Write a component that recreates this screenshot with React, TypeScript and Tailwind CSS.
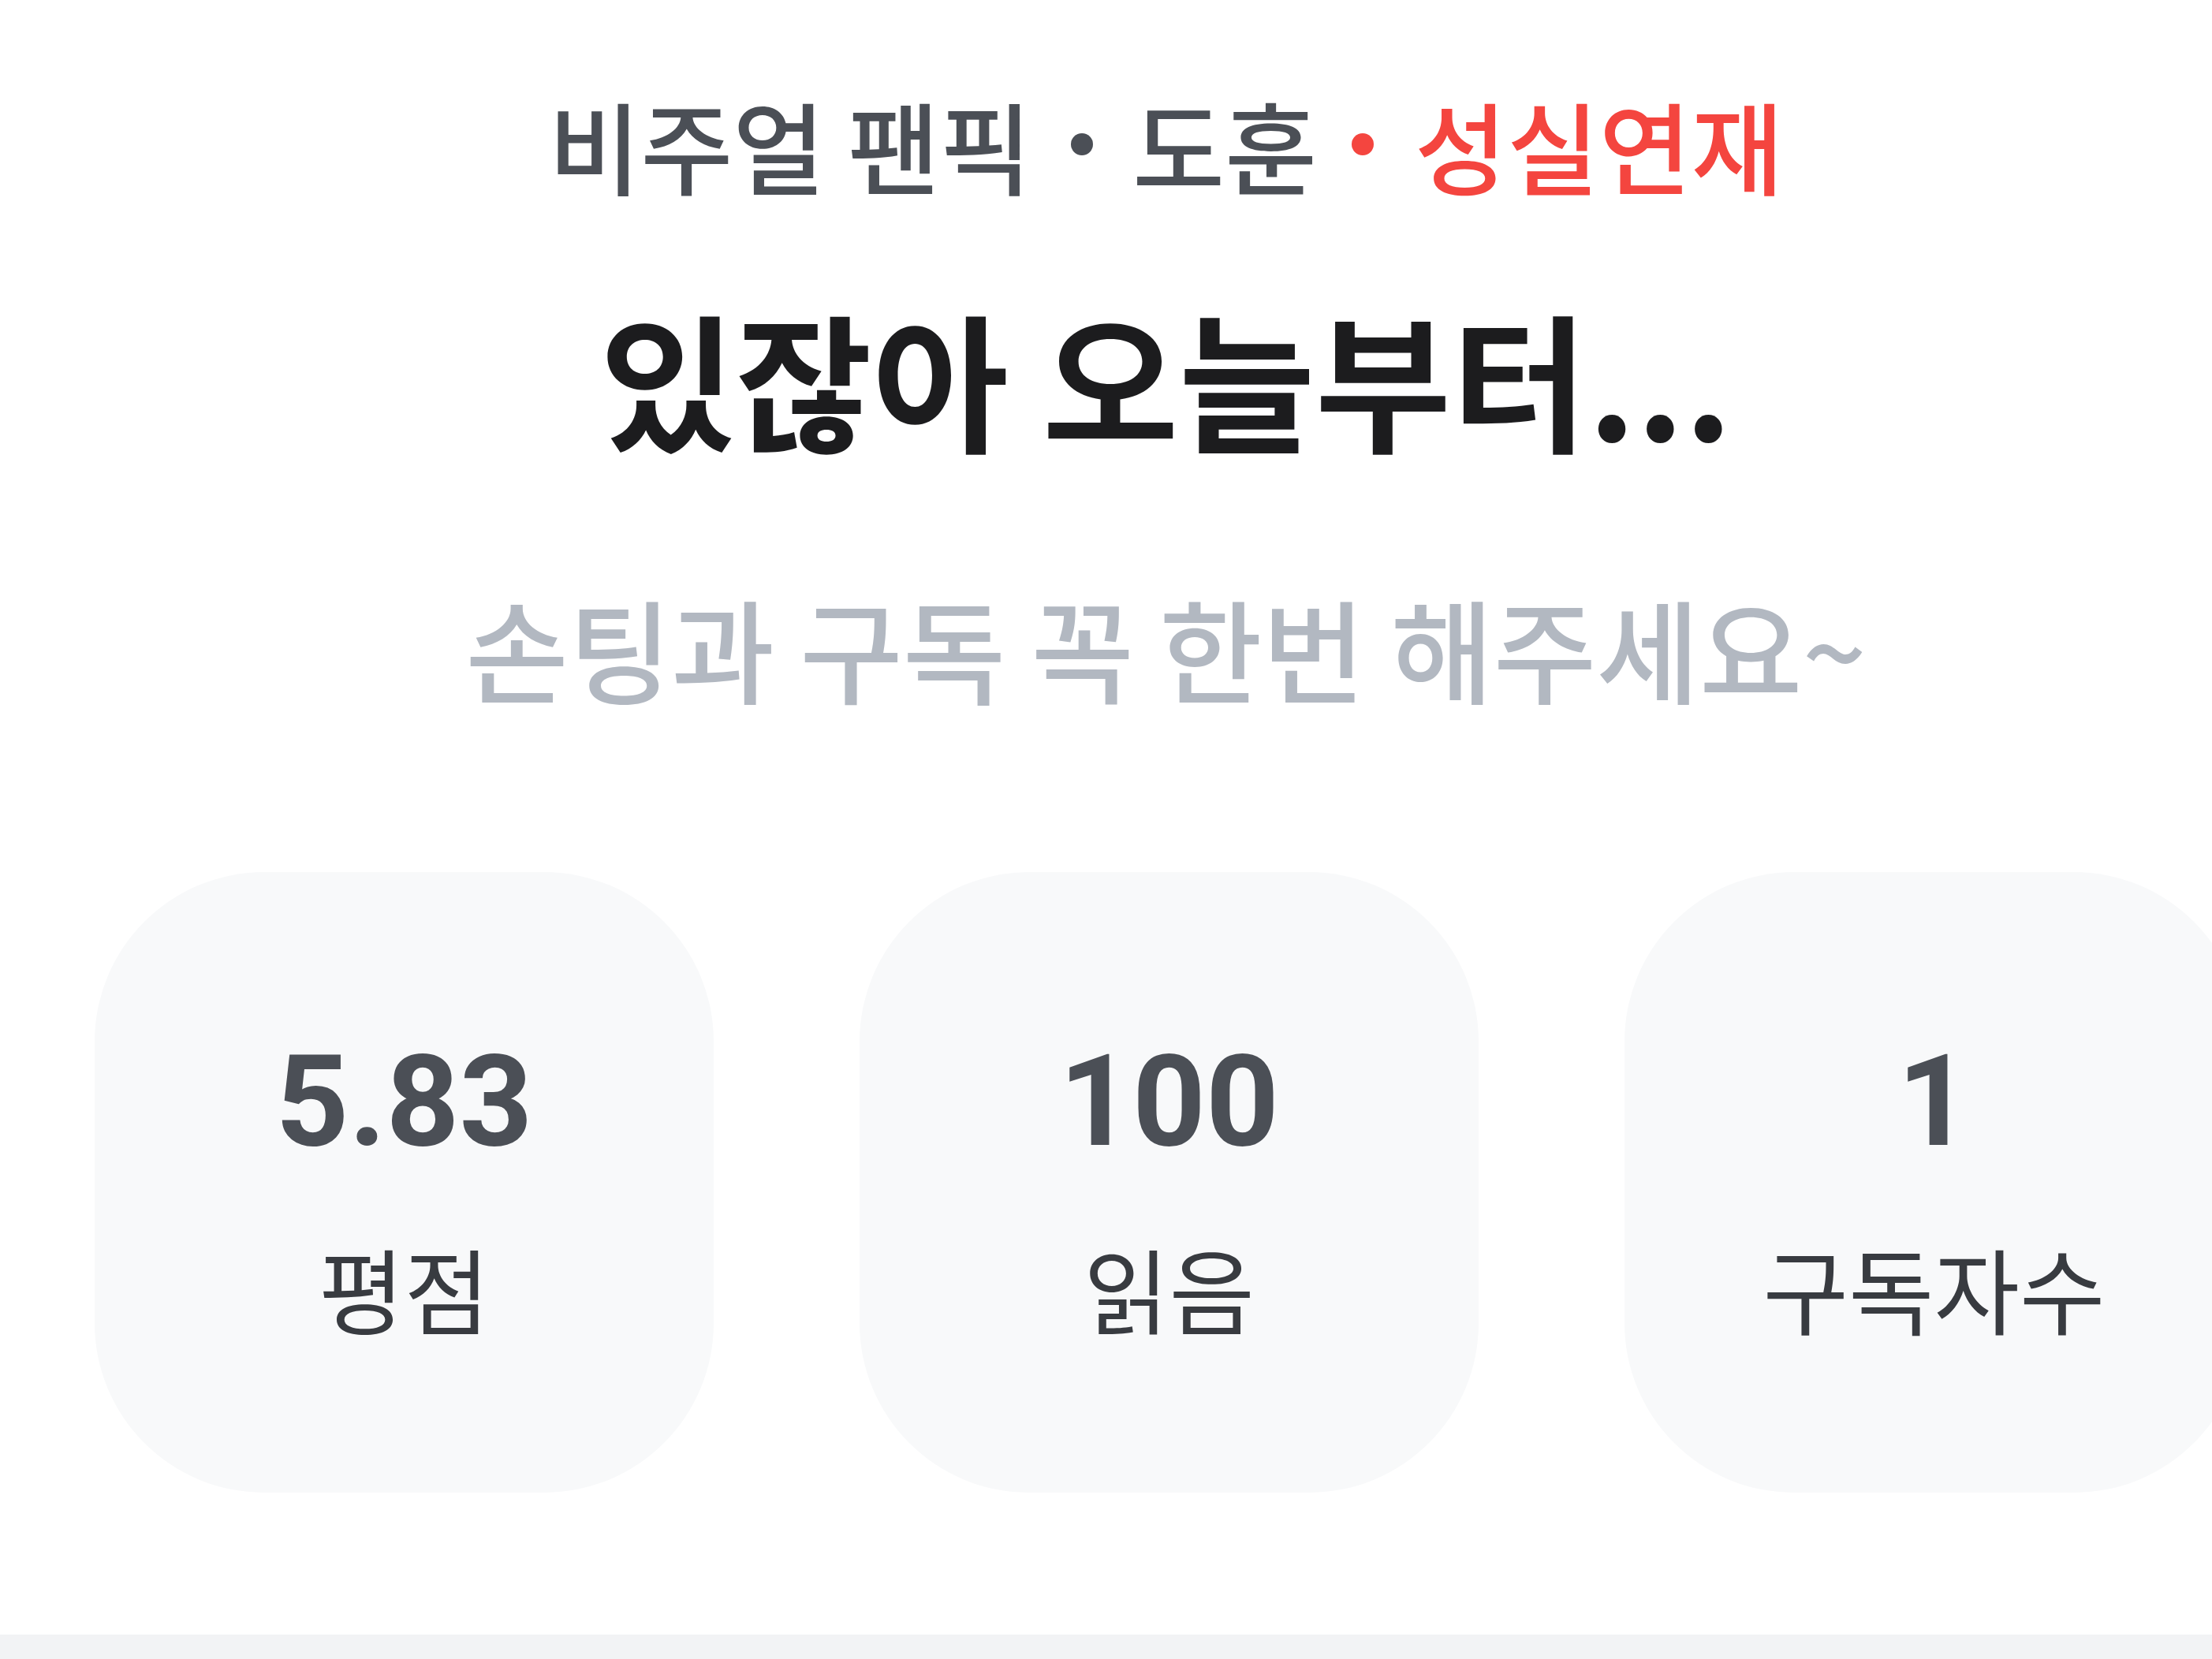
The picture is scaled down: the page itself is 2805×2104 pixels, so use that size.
import React from "react";

const stats = [
  { key: "rating", value: "5.83", label: "평점" },
  { key: "read", value: "100", label: "읽음" },
  { key: "subs", value: "1", label: "구독자수" },
];

const App = () => {
  return (
    <div className="w-full h-[2104px] overflow-hidden bg-white flex flex-col font-['Noto_Sans_CJK_KR','Noto_Sans',sans-serif]">
      <div className="flex flex-col items-center pt-[113px] pl-[152px]">
        <p className="flex items-center text-[127px] leading-[140px] font-medium text-[#4b4f56] whitespace-nowrap">
          <span>비주얼 팬픽</span>
          <span className="mx-[50px] w-[28px] h-[28px] rounded-full bg-[#4b4f56]" />
          <span>도훈</span>
          <span className="ml-[44px] mr-[52px] w-[28px] h-[28px] rounded-full bg-[#f4453f]" />
          <span className="text-[#f4453f]">성실연재</span>
        </p>
        <h1 className="mt-[124px] text-[188px] leading-[200px] font-bold text-[#1c1c1e] whitespace-nowrap">
          있잖아 오늘부터...
        </h1>
        <p className="mt-[163px] text-[142px] leading-[160px] font-medium text-[#b2b8c1] whitespace-nowrap">
          손팅과 구독 꼭 한번 해주세요~
        </p>
      </div>

      <div className="mt-[206px] flex gap-[185px] pl-[120px] overflow-hidden">
        {stats.map((s) => (
          <div
            key={s.key}
            className="shrink-0 w-[785px] h-[787px] rounded-[215px] bg-[#f8f9fa] flex flex-col items-center justify-center gap-[81px] pt-[6px]"
          >
            <span className="font-['Roboto',sans-serif] font-bold text-[162px] leading-[180px] text-[#4b4f56]">
              {s.value}
            </span>
            <span className="text-[118px] leading-[130px] text-[#383b40]">
              {s.label}
            </span>
          </div>
        ))}
      </div>

      <div className="mt-auto h-[31px] bg-[#f2f3f5]" />
    </div>
  );
};

export default App;
